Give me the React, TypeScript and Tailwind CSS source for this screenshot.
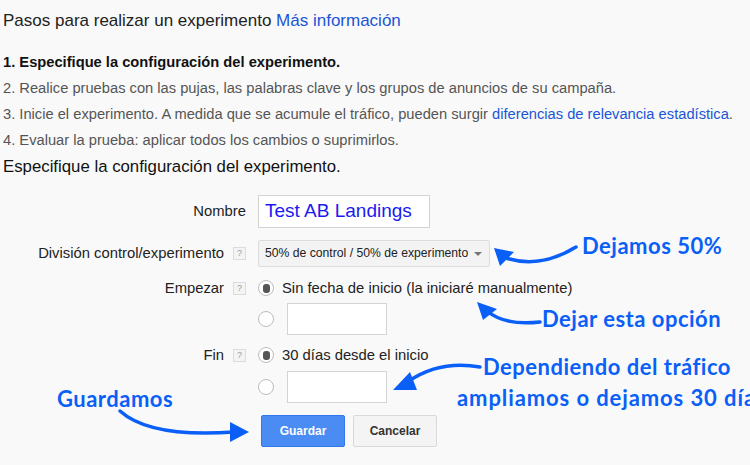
import React from 'react';

const HelpBox = () => (
  <span className="inline-flex items-center justify-center w-[13px] h-[13px] border border-[#dcdcdc] bg-[#f4f4f4] text-[9px] leading-none text-[#999]">?</span>
);

const Radio = ({ checked }: { checked?: boolean }) => (
  <span className="inline-flex items-center justify-center w-[16px] h-[16px] rounded-full border border-[#bdbdbd] bg-white shrink-0">
    {checked && <span className="w-[7px] h-[9px] rounded-[3px] bg-[#555]"></span>}
  </span>
);

const Row = ({ label, help, children, className }: { label?: string; help?: boolean; children: React.ReactNode; className?: string }) => (
  <div className={`flex items-center ${className ?? ''}`}>
    <div className="w-[246px] flex justify-end items-center gap-[9px] text-[14.8px] text-[#222]">
      {label && <span>{label}</span>}
      {help && <HelpBox />}
    </div>
    <div className="ml-[12px] flex items-center">{children}</div>
  </div>
);

const App: React.FC = () => {
  return (
    <div className="relative w-[750px] h-[465px] overflow-hidden bg-[#f9f9f9] font-['Liberation_Sans',Arial,sans-serif] text-[#222]">
      <div className="px-[3px]">
        {/* Header */}
        <div className="mt-[11px] text-[17px] leading-[20px] text-[#222]">
          Pasos para realizar un experimento <span className="text-[#1a55d6]">Más información</span>
        </div>

        {/* Steps */}
        <div className="mt-[18px] text-[14.7px] leading-[26px] text-[#555] whitespace-nowrap">
          <div className="font-bold text-[#111]">1. Especifique la configuración del experimento.</div>
          <div>2. Realice pruebas con las pujas, las palabras clave y los grupos de anuncios de su campaña.</div>
          <div>
            3. Inicie el experimento. A medida que se acumule el tráfico, pueden surgir{' '}
            <span className="text-[#1a55d6]">diferencias de relevancia estadística</span>.
          </div>
          <div>4. Evaluar la prueba: aplicar todos los cambios o suprimirlos.</div>
        </div>

        <div className="text-[16.8px] leading-[28px] text-[#111]">Especifique la configuración del experimento.</div>
      </div>

      {/* Form */}
      <Row label="Nombre" className="mt-[14px]">
        <div className="w-[172px] h-[33px] border border-[#d4d4d4] bg-white flex items-center px-[6px] text-[19px] text-[#1a1af0]">
          Test AB Landings
        </div>
      </Row>

      <Row label="División control/experimento" help className="mt-[12px]">
        <div className="w-[232px] h-[27px] border border-[#dcdcdc] bg-[#f3f3f3] rounded-[2px] flex items-center justify-between pl-[6px] pr-[7px] text-[12.2px] text-[#222]">
          <span>50% de control / 50% de experimento</span>
          <span className="w-0 h-0 border-l-[4px] border-r-[4px] border-t-[4px] border-l-transparent border-r-transparent border-t-[#777]"></span>
        </div>
      </Row>

      <Row label="Empezar" help className="mt-[10px] h-[22px]">
        <Radio checked />
        <span className="ml-[8px] text-[14.8px]">Sin fecha de inicio (la iniciaré manualmente)</span>
      </Row>

      <Row className="mt-[4px]">
        <Radio />
        <div className="ml-[13px] w-[100px] h-[32px] border border-[#d4d4d4] bg-white"></div>
      </Row>

      <Row label="Fin" help className="mt-[9px] h-[22px]">
        <Radio checked />
        <span className="ml-[8px] text-[14.8px]">30 días desde el inicio</span>
      </Row>

      <Row className="mt-[5px]">
        <Radio />
        <div className="ml-[13px] w-[100px] h-[32px] border border-[#d4d4d4] bg-white"></div>
      </Row>

      <Row className="mt-[12px]">
        <div className="ml-[3px] flex gap-[8px]">
          <button className="w-[84px] h-[32px] rounded-[2px] border border-[#3079ed] bg-[#4a8bf4] text-white text-[12px] font-bold">Guardar</button>
          <button className="w-[84px] h-[32px] rounded-[2px] border border-[#d9d9d9] bg-[#f4f4f4] text-[#333] text-[12px] font-bold">Cancelar</button>
        </div>
      </Row>

      {/* Annotations */}
      <div className="absolute inset-0 pointer-events-none font-['Lato',sans-serif] font-bold text-[#0a5ff7]">
        <div className="absolute left-[582px] top-[232px] text-[22px] leading-[28px] tracking-[0.5px]">Dejamos 50%</div>
        <div className="absolute left-[542px] top-[305px] text-[22px] leading-[28px] tracking-[0.5px]">Dejar esta opción</div>
        <div className="absolute left-[483px] top-[353px] text-[22px] leading-[28px] tracking-[0.5px] whitespace-nowrap">Dependiendo del tráfico</div>
        <div className="absolute left-[457px] top-[384px] text-[22px] leading-[28px] tracking-[0.9px] whitespace-nowrap">ampliamos o dejamos 30 días</div>
        <div className="absolute left-[57px] top-[385px] text-[22px] leading-[28px] tracking-[0.5px]">Guardamos</div>

        <svg className="absolute inset-0" width="750" height="465" viewBox="0 0 750 465">
          <g fill="none" stroke="#0a5ff7" strokeWidth="3.5" strokeLinecap="round">
            <path d="M576 247 Q540 269 506 258" />
            <path d="M540 322 Q505 326 487 311" />
            <path d="M480 367 Q440 360 409 381" />
            <path d="M120 411 Q150 438 234 432" />
          </g>
          <g fill="#0a5ff7">
            <polygon points="494,248 514,252 500,266" />
            <polygon points="477,302 497,309 483,320" />
            <polygon points="393,390 410,372 417,390" />
            <polygon points="249,432 230,422 230,442" />
          </g>
        </svg>
      </div>
    </div>
  );
};

export default App;
